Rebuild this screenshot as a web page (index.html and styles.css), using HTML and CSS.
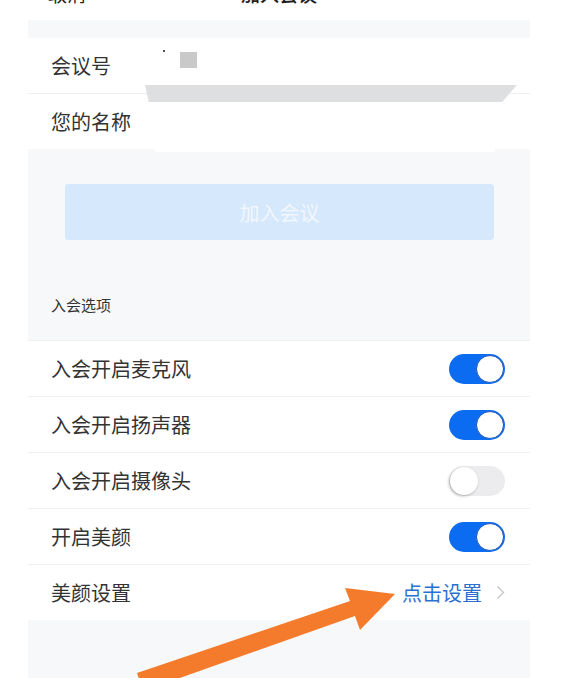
FILE: index.html
```html
<!DOCTYPE html>
<html lang="zh-CN">
<head>
    <meta charset="UTF-8">
    <meta name="viewport" content="width=device-width, initial-scale=1.0">
    <title>加入会议</title>
    <link rel="stylesheet" href="styles.css">
</head>
<body>
    <div class="screen">
        <div class="nav">
            <span class="nav-cancel">取消</span>
            <span class="nav-title">加入会议</span>
            <span></span>
        </div>

        <div class="panel">
            <!-- Meeting form -->
            <div class="form-group">
                <div class="row row-first">
                    <span class="label">会议号</span>
                    <div class="input-value">
                        <span class="mask-dot"></span>
                        <span class="mask-box"></span>
                    </div>
                </div>
                <div class="row">
                    <span class="label">您的名称</span>
                </div>
                <div class="redact-bar"></div>
                <div class="redact-white"></div>
            </div>

            <div class="button-wrap">
                <button type="button" class="join-button">加入会议</button>
            </div>

            <p class="section-title">入会选项</p>

            <!-- Join options -->
            <div class="options">
                <div class="row option">
                    <span class="label">入会开启麦克风</span>
                    <span class="toggle on"><span class="knob"></span></span>
                </div>
                <div class="row option">
                    <span class="label">入会开启扬声器</span>
                    <span class="toggle on"><span class="knob"></span></span>
                </div>
                <div class="row option">
                    <span class="label">入会开启摄像头</span>
                    <span class="toggle"><span class="knob"></span></span>
                </div>
                <div class="row option">
                    <span class="label">开启美颜</span>
                    <span class="toggle on"><span class="knob"></span></span>
                </div>
                <div class="row option option-last">
                    <span class="label">美颜设置</span>
                    <a href="#" class="setting-link">
                        点击设置
                        <svg class="chevron" width="9" height="15" viewBox="0 0 9 15">
                            <path d="M1.5 1.5 L7.5 7.5 L1.5 13.5" fill="none" stroke="#c6c6c8" stroke-width="1.4"/>
                        </svg>
                    </a>
                </div>
            </div>
        </div>

        <svg class="arrow" width="567" height="678" viewBox="0 0 567 678">
            <polygon points="137,673 350,601 345,588 395,594 360,630 355,616 143,691" fill="#f47b2b"/>
        </svg>
    </div>
</body>
</html>
```

FILE: styles.css
```css
body {
    margin: 0;
    background-color: #fff;
    font-family: "Noto Sans CJK SC", "Noto Sans", sans-serif;
    color: #333;
}
.screen {
    position: relative;
    width: 567px;
    height: 678px;
    overflow: hidden;
    display: flex;
    flex-direction: column;
}
.nav {
    display: grid;
    grid-template-columns: 1fr auto 1fr;
    width: 502px;
    height: 20px;
    margin-left: 28px;
    font-size: 19px;
    line-height: 20px;
    color: #1f1f1f;
}
.nav span {
    margin-top: -16px;
}
.nav-cancel {
    padding-left: 20px;
}
.nav-title {
    font-weight: 500;
}
.panel {
    flex: 1;
    width: 502px;
    margin-left: 28px;
    padding-top: 18px;
    background-color: #f7f8fa;
}
.form-group {
    position: relative;
    background-color: #fff;
}
.row {
    display: flex;
    align-items: center;
    height: 55px;
    padding: 0 25px 0 23px;
    background-color: #fff;
}
.row-first {
    border-bottom: 1px solid #efeff1;
}
.label {
    font-size: 20px;
    line-height: 24px;
    color: #333;
}
.row-first .label {
    width: 109px;
}
.input-value {
    display: flex;
    align-items: flex-start;
    gap: 15px;
    align-self: flex-start;
    margin-top: 12px;
}
.mask-dot {
    width: 2px;
    height: 2px;
    margin-left: 3px;
    background-color: #555;
}
.mask-box {
    width: 17px;
    height: 16px;
    margin-top: 2px;
    background-color: #c9c9c9;
}
.redact-bar {
    position: absolute;
    left: 117px;
    top: 47px;
    width: 372px;
    height: 17px;
    background-color: #dedfe1;
    clip-path: polygon(0 0, 100% 0, 96% 100%, 1% 100%);
}
.redact-white {
    position: absolute;
    left: 127px;
    top: 110px;
    width: 340px;
    height: 4px;
    background-color: #fff;
}
.button-wrap {
    padding: 35px 36px 0 37px;
}
.join-button {
    display: block;
    width: 100%;
    height: 56px;
    border: none;
    border-radius: 3px;
    background-color: #d6e8fc;
    color: #f1f7fe;
    font-family: inherit;
    font-size: 20px;
}
.section-title {
    margin: 55px 0 25px;
    padding-left: 23px;
    font-size: 15px;
    line-height: 20px;
    color: #333;
}
.options {
    border-top: 1px solid #efeff1;
}
.option {
    justify-content: space-between;
    border-bottom: 1px solid #efeff1;
}
.option-last {
    border-bottom: none;
}
.toggle {
    position: relative;
    display: block;
    width: 56px;
    height: 30px;
    border-radius: 15px;
    background-color: #ececee;
}
.toggle.on {
    background-color: #0b6cf1;
}
.knob {
    position: absolute;
    top: 1px;
    left: 1px;
    width: 28px;
    height: 28px;
    box-sizing: border-box;
    border-radius: 50%;
    background-color: #fff;
    box-shadow: -1px 1px 3px rgba(0,0,0,0.3);
}
.toggle.on .knob {
    left: auto;
    right: 1px;
    border: 1px solid #1c56b8;
    box-shadow: none;
}
.setting-link {
    display: flex;
    align-items: center;
    gap: 14px;
    font-size: 20px;
    line-height: 24px;
    color: #2c6fd3;
    text-decoration: none;
}
.arrow {
    position: absolute;
    top: 0;
    left: 0;
    pointer-events: none;
}
```
